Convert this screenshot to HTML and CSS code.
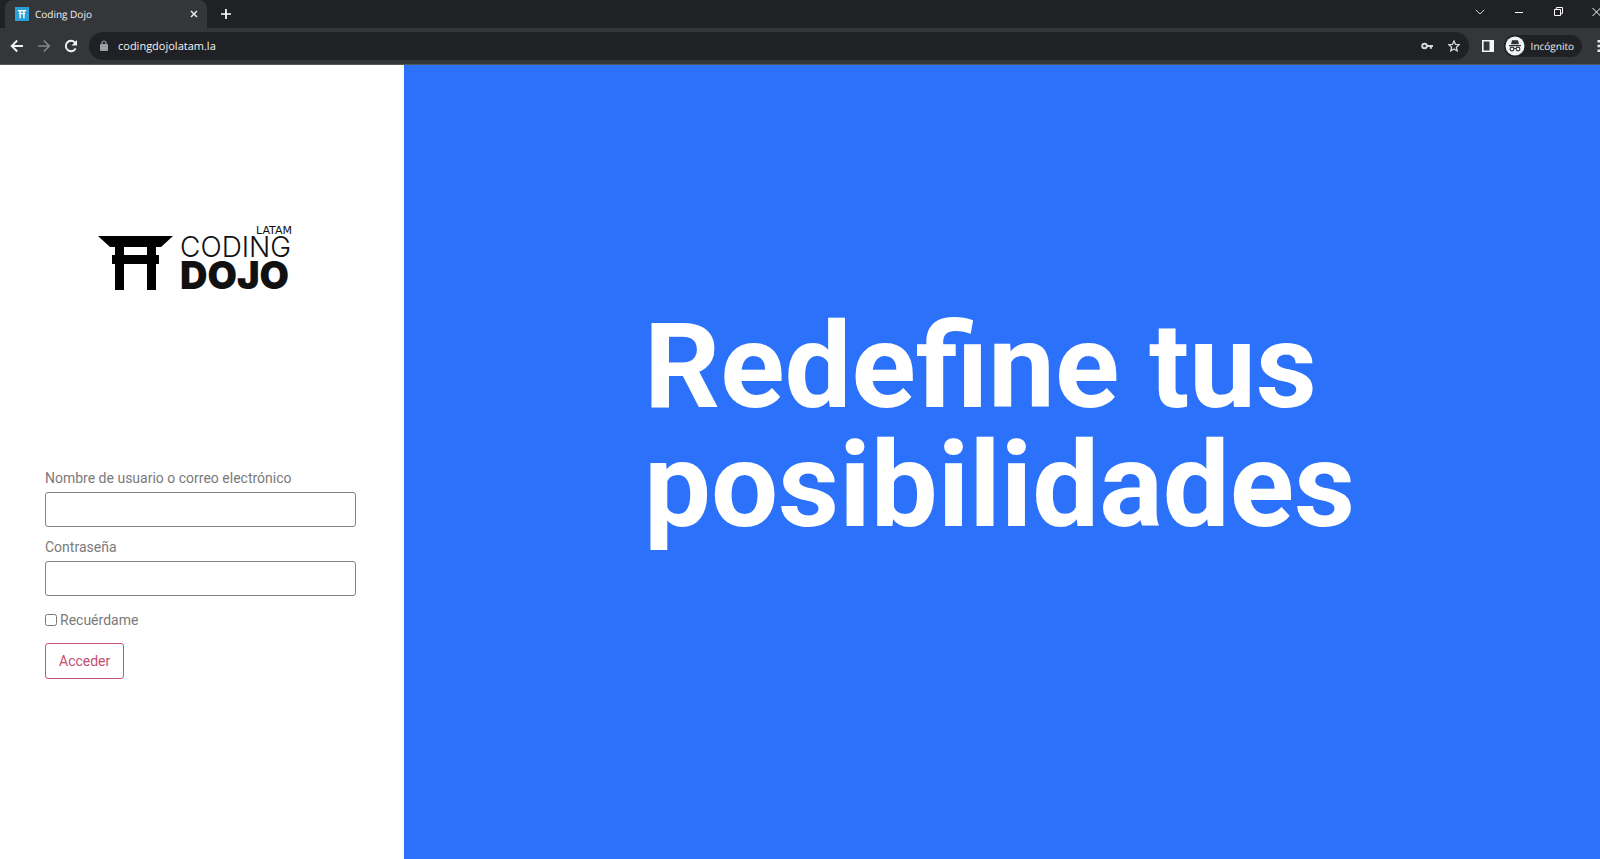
FILE: index.html
```html
<!DOCTYPE html>
<html lang="es">
<head>
<meta charset="utf-8">
<meta name="viewport" content="width=device-width, initial-scale=1">
<title>Coding Dojo</title>
<link rel="stylesheet" href="styles.css">
</head>
<body>
<header class="browser">
  <div class="tabstrip">
    <div class="tab">
      <svg class="favicon" viewBox="0 0 14 14" aria-hidden="true"><rect width="14" height="14" fill="#2b9fd8"/><path d="M2.500 3h9l-1 1.600h-7zM4 6h6v1.200H4zM4.400 4h1.400v7.200H4.400zM8.200 4h1.400v7.200H8.200z" fill="#fff"/></svg>
      <span class="tab-title">Coding Dojo</span>
      <button class="icon-btn" type="button" aria-label="Cerrar pestaña"><svg width="8" height="8" viewBox="0 0 8 8"><path d="M1 1l6 6M7 1L1 7" stroke="#e8eaed" stroke-width="1.500"/></svg></button>
    </div>
    <button class="icon-btn new-tab" type="button" aria-label="Nueva pestaña"><svg width="12" height="12" viewBox="0 0 12 12"><path d="M6 1v10M1 6h10" stroke="#fff" stroke-width="1.700"/></svg></button>
    <div class="window-controls">
      <button class="icon-btn" type="button" aria-label="Buscar pestañas"><svg width="10" height="10" viewBox="0 0 10 10"><path d="M.8 2.800L5 7l4.200-4.200" fill="none" stroke="#d0d1d3"/></svg></button>
      <button class="icon-btn" type="button" aria-label="Minimizar"><svg width="10" height="10" viewBox="0 0 10 10"><path d="M1 5.500h8" stroke="#fff"/></svg></button>
      <button class="icon-btn" type="button" aria-label="Restaurar"><svg width="10" height="10" viewBox="0 0 10 10"><path d="M1.500 2.500h6v6h-6zM3 2.500l.5-2h6v6l-2 .5" fill="none" stroke="#fff"/></svg></button>
      <button class="icon-btn" type="button" aria-label="Cerrar"><svg width="8" height="10" viewBox="0 0 8 10"><path d="M.5 1l8 8M8.500 1l-8 8" stroke="#fff"/></svg></button>
    </div>
  </div>
  <div class="toolbar">
    <nav class="nav-buttons">
      <button class="icon-btn" type="button" aria-label="Atrás"><svg width="14" height="14" viewBox="0 0 14 14"><path d="M13 7H2M7.200 1.500L1.700 7l5.500 5.500" fill="none" stroke="#f1f3f4" stroke-width="1.900"/></svg></button>
      <button class="icon-btn" type="button" aria-label="Adelante"><svg width="14" height="14" viewBox="0 0 14 14"><path d="M1 7h11M6.800 1.500L12.300 7l-5.500 5.500" fill="none" stroke="#85868a" stroke-width="1.600"/></svg></button>
      <button class="icon-btn" type="button" aria-label="Recargar"><svg width="14" height="14" viewBox="0 0 14 14"><path d="M11.700 9.300A5.200 5.200 0 1 1 10.800 3.400L12 4.700" fill="none" stroke="#f1f3f4" stroke-width="1.900"/><path d="M13 1v5.500H7.500z" fill="#f1f3f4"/></svg></button>
    </nav>
    <div class="omnibox">
      <svg width="8" height="12" viewBox="0 0 8 12" aria-hidden="true"><rect y="4" width="8" height="7" rx="1" fill="#9aa0a6"/><path d="M2 4.500V3a2 2 0 0 1 4 0v1.500" fill="none" stroke="#9aa0a6" stroke-width="1.200"/></svg>
      <input class="address" type="text" value="codingdojolatam.la" aria-label="Dirección">
      <button class="icon-btn" type="button" aria-label="Contraseñas"><svg width="12" height="8" viewBox="0 0 12 8"><circle cx="3.500" cy="4" r="2.300" fill="none" stroke="#d5d7da" stroke-width="1.900"/><path d="M6 4h6M9.900 4v2.800" stroke="#d5d7da" stroke-width="2"/></svg></button>
      <button class="icon-btn" type="button" aria-label="Marcador"><svg width="12" height="12" viewBox="0 0 12 12"><path d="M6 1l1.500 3.400 3.700.3-2.800 2.500.8 3.700L6 9l-3.200 1.900.8-3.700L.8 4.700l3.700-.3z" fill="none" stroke="#d5d7da" stroke-width="1.300"/></svg></button>
    </div>
    <button class="icon-btn" type="button" aria-label="Panel lateral"><svg width="12" height="12" viewBox="0 0 12 12"><path d="M0 0h12v12H0zM1.600 1.600v8.800h5.900V1.600z" fill="#f4f5f6" fill-rule="evenodd"/></svg></button>
    <button class="profile" type="button">
      <svg width="20" height="20" viewBox="0 0 20 20" aria-hidden="true"><circle cx="10" cy="10" r="9.500" fill="#f1f3f4"/><path d="M7 4.300h6l1 4H6zM4 9h12v1.200H4z" fill="#303134"/><g fill="none" stroke="#303134" stroke-width="1.100"><circle cx="7" cy="13" r="1.900"/><circle cx="13" cy="13" r="1.900"/><path d="M8.900 12.700q1.100-.8 2.200 0"/></g></svg>
      <span>Incógnito</span>
    </button>
    <button class="icon-btn menu" type="button" aria-label="Menú"><svg width="4" height="12" viewBox="0 0 4 12"><path d="M1.500 0H4v2.500H1.500zM1.500 4.700H4v2.500H1.500zM1.500 9.400H4v2.500H1.500z" fill="#e8eaed"/></svg></button>
  </div>
</header>
<main class="page">
  <section class="login">
    <svg class="logo" viewBox="0 0 200 76" role="img" aria-label="Coding Dojo Latam">
      <path d="M0 13h75L63 24h-5v8h3v9h-3v26h-9V41H26v26h-9V41h-3v-9h3v-8h-5zM26 24v8h23v-8z" fill="#000" fill-rule="evenodd"/>
      <text class="logo-latam" x="194" y="11" text-anchor="end">LATAM</text>
      <text class="logo-coding" x="82" y="34">CODING</text>
      <text class="logo-dojo" x="82" y="66">DOJO</text>
    </svg>
    <form class="form">
      <div class="field">
        <label for="user">Nombre de usuario o correo electrónico</label>
        <input id="user" type="text">
      </div>
      <div class="field">
        <label for="pass">Contraseña</label>
        <input id="pass" type="password">
      </div>
      <div class="remember">
        <input id="remember" type="checkbox">
        <label for="remember">Recuérdame</label>
      </div>
      <button class="submit" type="button">Acceder</button>
    </form>
  </section>
  <section class="hero">
    <h1>Redefine tus<br>posibilidades</h1>
  </section>
</main>
</body>
</html>
```
FILE: styles.css
```css
* { box-sizing: border-box; }

body {
  margin: 0;
  min-height: 100vh;
  display: flex;
  flex-direction: column;
  overflow-x: hidden;
  background: #fff;
  font-family: Roboto, sans-serif;
}

button, input {
  font: inherit;
  text-rendering: inherit;
}

/* Browser window */
.browser {
  background: #35363a;
  border-bottom: 1px solid #55565a;
  color: #f1f3f4;
  font-family: "Open Sans", "Noto Sans", sans-serif;
  font-size: 10px;
  font-weight: 500;
  text-rendering: geometricPrecision;
}

.icon-btn {
  display: flex;
  align-items: center;
  justify-content: center;
  padding: 0;
  border: 0;
  background: none;
}

.tabstrip {
  display: flex;
  height: 28px;
  padding-left: 5px;
  background: #202124;
}

.tab {
  display: flex;
  align-items: center;
  gap: 6px;
  width: 202px;
  padding: 0 9px 0 10px;
  border-radius: 8px 8px 0 0;
  background: #35363a;
}

.favicon { width: 14px; height: 14px; }
.tab-title { flex: 1; }
.new-tab { width: 38px; }

.window-controls {
  display: flex;
  gap: 29px;
  height: 24px;
  margin-left: auto;
}

.toolbar {
  display: flex;
  align-items: center;
  height: 36px;
}

.nav-buttons {
  display: flex;
  gap: 13px;
  padding: 0 11px 0 10px;
}

.omnibox {
  display: flex;
  flex: 1;
  align-items: center;
  gap: 15px;
  height: 28px;
  margin-right: 13px;
  padding: 0 9px 0 11px;
  border-radius: 14px;
  background: #202124;
}

.address {
  flex: 1;
  min-width: 0;
  margin-left: -5px;
  padding: 0;
  border: 0;
  outline: 0;
  background: none;
  color: #f1f3f4;
  font-size: 11px;
}

.profile {
  display: flex;
  align-items: center;
  gap: 6px;
  height: 22px;
  margin-left: 10px;
  padding: 0 8px 0 1px;
  border: 0;
  border-radius: 11px;
  background: #202124;
  color: #f1f3f4;
}

.menu { margin-left: 14px; }

/* Page */
.page {
  display: grid;
  grid-template-columns: 25.25% 1fr;
  flex: 1;
}

.login { padding: 158px 48px 40px 45px; }

.logo {
  display: block;
  width: 200px;
  height: 76px;
  margin: 0 0 169px 53px;
}

.logo text { font-family: Inter, sans-serif; fill: #111; }
.logo .logo-latam { font-family: "DejaVu Sans", sans-serif; font-size: 11px; }
.logo .logo-coding { font-size: 28px; font-weight: 300; }
.logo .logo-dojo { font-size: 38px; font-weight: 900; }

.form {
  color: #7a7a7a;
  font-size: 14px;
  line-height: 20px;
}

.field {
  display: flex;
  flex-direction: column;
  gap: 4px;
  margin-bottom: 10px;
}

.field input {
  width: 100%;
  height: 35px;
  padding: 4px 12px;
  border: 1px solid #818488;
  border-radius: 3px;
  background: #fff;
}

.remember {
  display: flex;
  align-items: center;
  gap: 3px;
  margin: 14px 0 13px;
}

.remember input {
  width: 12px;
  height: 12px;
  margin: 0;
}

.submit {
  height: 36px;
  padding: 0 13px;
  border: 1px solid #c25578;
  border-radius: 3px;
  background: #fff;
  color: #c25070;
}

.hero {
  padding: 242px 40px 40px 240px;
  background: #2b71fa;
}

.hero h1 {
  margin: 0;
  color: #fff;
  font-size: 119px;
  font-weight: 700;
  line-height: 119px;
}
```
